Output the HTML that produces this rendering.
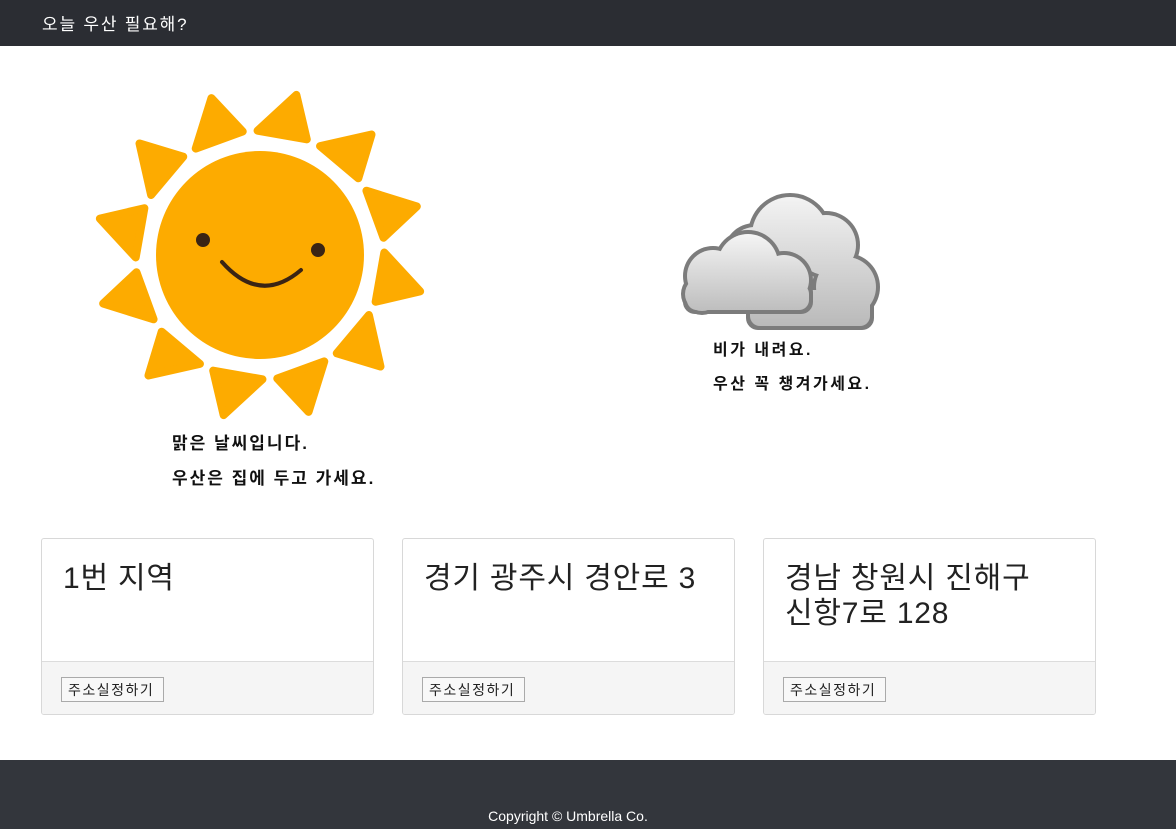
<!DOCTYPE html>
<html><head><meta charset="utf-8">
<style>
*{margin:0;padding:0;box-sizing:border-box}
body{width:1176px;height:829px;overflow:hidden;background:#fff;font-family:"Liberation Sans","Noto Sans CJK KR",sans-serif;position:relative;color:#212529}
.hdr{position:absolute;left:0;top:0;width:1176px;height:46px;background:#2b2d33}
.hdr span{position:absolute;left:42px;top:10px;color:#fff;font-size:17px;letter-spacing:1.8px}
.ft{position:absolute;left:0;top:760px;width:1176px;height:69px;background:#33363c}
.ft span{position:absolute;left:0;width:1136px;text-align:center;top:48px;color:#fff;font-size:14px}
.t{position:absolute;font-size:17px;font-weight:bold;color:#111;letter-spacing:2px}
.card{position:absolute;top:538px;width:333px;height:177px;border:1px solid #d8d8d8;border-radius:3px;overflow:hidden}
.card h2{position:absolute;left:21px;top:22px;font-size:30px;font-weight:normal;line-height:35px;color:#222;letter-spacing:0.8px;white-space:nowrap}
.card .f{position:absolute;left:0;top:122px;width:100%;height:55px;background:#f5f5f5;border-top:1px solid #dcdcdc}
.card button{position:absolute;left:19px;top:15px;height:25px;padding:0 9px 0 6px;font-size:14px;letter-spacing:1.5px;font-family:"Liberation Sans","Noto Sans CJK KR",sans-serif;background:#f8f8f8;border:1px solid #aaa;color:#222}
</style></head><body>
<div class="hdr"><span>오늘 우산 필요해?</span></div>

<svg style="position:absolute;left:0;top:0" width="1176" height="520">
 <g fill="#fdab00" stroke="#fdab00" stroke-width="8" stroke-linejoin="round">
  <g transform="translate(260,255)">
   <polygon points="-24,-122 26,-122 8,-164" transform="rotate(-20)"/>
   <polygon points="-24,-122 26,-122 8,-164" transform="rotate(10)"/>
   <polygon points="-24,-122 26,-122 8,-164" transform="rotate(40)"/>
   <polygon points="-24,-122 26,-122 8,-164" transform="rotate(70)"/>
   <polygon points="-24,-122 26,-122 8,-164" transform="rotate(100)"/>
   <polygon points="-24,-122 26,-122 8,-164" transform="rotate(130)"/>
   <polygon points="-24,-122 26,-122 8,-164" transform="rotate(160)"/>
   <polygon points="-24,-122 26,-122 8,-164" transform="rotate(190)"/>
   <polygon points="-24,-122 26,-122 8,-164" transform="rotate(220)"/>
   <polygon points="-24,-122 26,-122 8,-164" transform="rotate(250)"/>
   <polygon points="-24,-122 26,-122 8,-164" transform="rotate(280)"/>
   <polygon points="-24,-122 26,-122 8,-164" transform="rotate(310)"/>
   <circle r="104" stroke="none"/>
  </g>
 </g>
 <circle cx="203" cy="240" r="7" fill="#3a2414"/>
 <circle cx="318" cy="250" r="7" fill="#3a2414"/>
 <path d="M222 262 Q260 305 301 270" fill="none" stroke="#3a2414" stroke-width="4" stroke-linecap="round"/>

 <defs>
  <linearGradient id="g1" gradientUnits="userSpaceOnUse" x1="0" y1="195" x2="0" y2="330">
   <stop offset="0" stop-color="#f4f4f4"/><stop offset="1" stop-color="#b8b8b8"/>
  </linearGradient>
  <linearGradient id="g2" gradientUnits="userSpaceOnUse" x1="0" y1="232" x2="0" y2="312">
   <stop offset="0" stop-color="#f6f6f6"/><stop offset="1" stop-color="#bdbdbd"/>
  </linearGradient>
 </defs>
 <g fill="#7c7c7c">
  <circle cx="790" cy="235" r="42"/><circle cx="826" cy="245" r="34"/><circle cx="846" cy="287" r="34"/><circle cx="755" cy="255" r="32"/><rect x="746" y="286" width="128" height="44" rx="12"/>
 </g>
 <g fill="url(#g1)">
  <circle cx="790" cy="235" r="38"/><circle cx="826" cy="245" r="30"/><circle cx="846" cy="287" r="30"/><circle cx="755" cy="255" r="28"/><rect x="750" y="290" width="120" height="36" rx="10"/>
 </g>
 <g fill="#7c7c7c">
  <circle cx="748" cy="264" r="34"/><circle cx="713" cy="276" r="30"/><circle cx="784" cy="280" r="29"/><circle cx="702" cy="294" r="21"/><rect x="683" y="280" width="130" height="34" rx="12"/>
 </g>
 <g fill="url(#g2)">
  <circle cx="748" cy="264" r="30"/><circle cx="713" cy="276" r="26"/><circle cx="784" cy="280" r="25"/><circle cx="702" cy="294" r="17"/><rect x="687" y="284" width="122" height="26" rx="10"/>
 </g>
</svg>

<div class="t" style="left:172px;top:429px">맑은 날씨입니다.</div>
<div class="t" style="left:172px;top:464px">우산은 집에 두고 가세요.</div>
<div class="t" style="left:713px;top:336px;font-size:16px;letter-spacing:2.5px">비가 내려요.</div>
<div class="t" style="left:713px;top:370px;font-size:16px;letter-spacing:2.5px">우산 꼭 챙겨가세요.</div>

<div class="card" style="left:41px"><h2>1번 지역</h2><div class="f"><button>주소실정하기</button></div></div>
<div class="card" style="left:402px"><h2>경기 광주시 경안로 3</h2><div class="f"><button>주소실정하기</button></div></div>
<div class="card" style="left:763px"><h2>경남 창원시 진해구<br>신항7로 128</h2><div class="f"><button>주소실정하기</button></div></div>

<div class="ft"><span>Copyright © Umbrella Co.</span></div>
</body></html>
